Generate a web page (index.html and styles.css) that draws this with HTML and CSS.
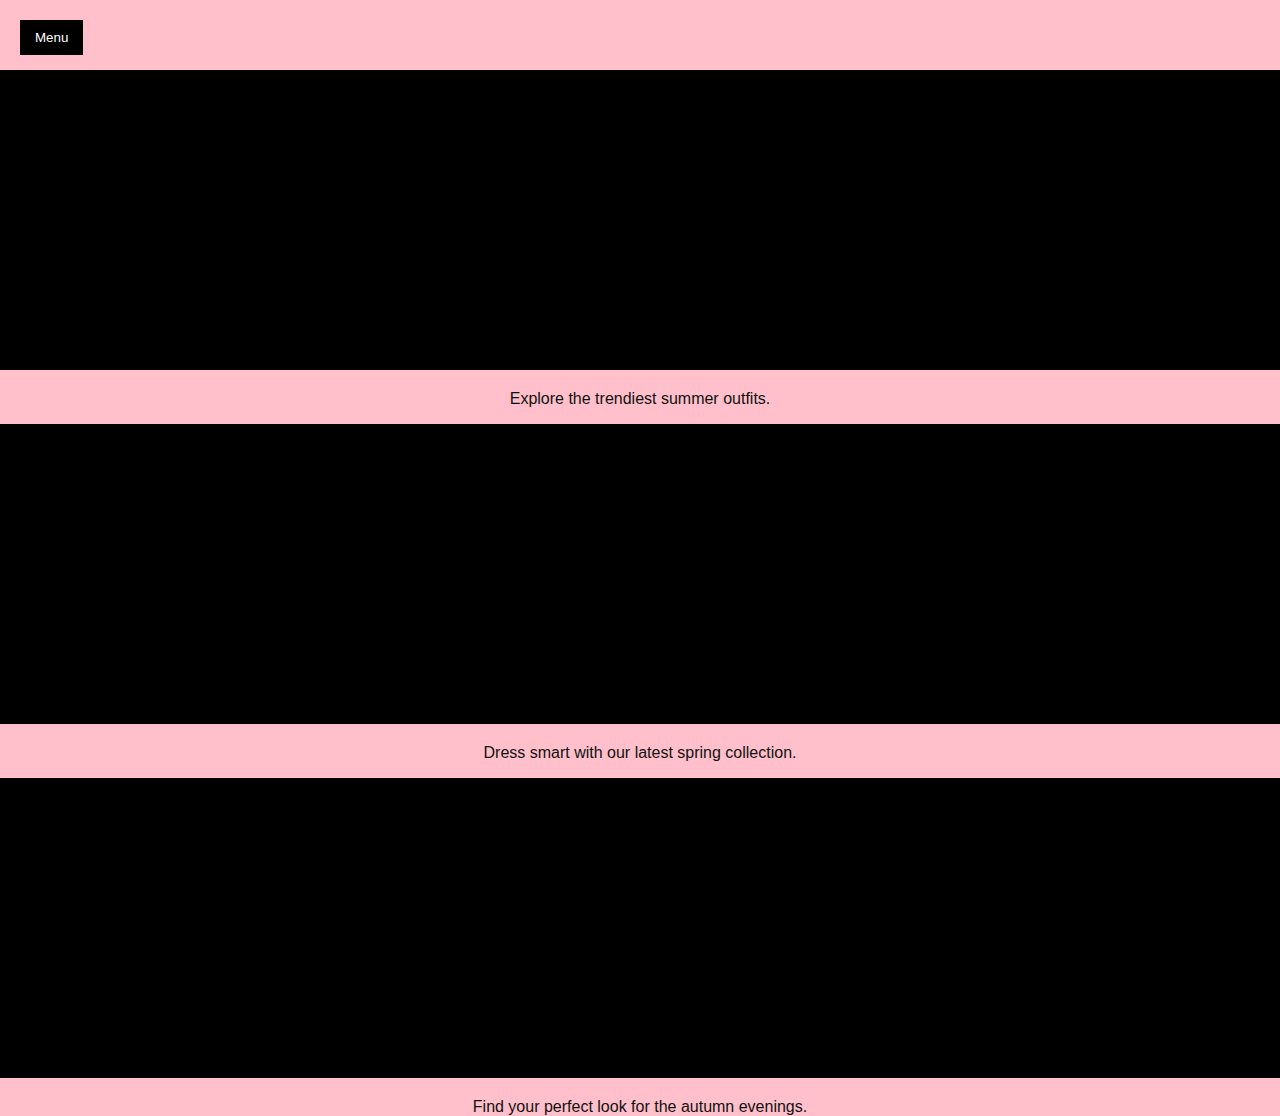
FILE: index.html
```html
<!DOCTYPE html>
<html lang="en">
<head>
<meta charset="utf-8">
<title>Outfits</title>
<link rel="stylesheet" href="styles.css">
</head>
<body>
<header class="top">
  <button class="menu-btn">Menu</button>
</header>
<main class="feed">
  <section class="item">
    <div class="media"></div>
    <p class="caption">Explore the trendiest summer outfits.</p>
  </section>
  <section class="item">
    <div class="media"></div>
    <p class="caption">Dress smart with our latest spring collection.</p>
  </section>
  <section class="item">
    <div class="media"></div>
    <p class="caption">Find your perfect look for the autumn evenings.</p>
  </section>
</main>
</body>
</html>
```

FILE: styles.css
```css
* { box-sizing: border-box; }
html, body {
  margin: 0;
  padding: 0;
  background: #ffc0cb;
  font-family: "Liberation Sans", Arial, sans-serif;
}
.top {
  display: flex;
  align-items: flex-start;
  height: 70px;
  padding: 20px;
  background: #ffc0cb;
}
.menu-btn {
  background: #000;
  color: #fff;
  border: none;
  padding: 10px 15px;
  font-family: "Liberation Sans", Arial, sans-serif;
  font-size: 13.33px;
  line-height: 15px;
  height: 35px;
  cursor: pointer;
}
.feed {
  display: flex;
  flex-direction: column;
}
.media {
  height: 300px;
  background: #000;
}
.caption {
  margin: 0;
  padding: 20px 0 16px;
  line-height: 18px;
  font-size: 16px;
  text-align: center;
  color: #111;
  background: #ffc0cb;
}
```
